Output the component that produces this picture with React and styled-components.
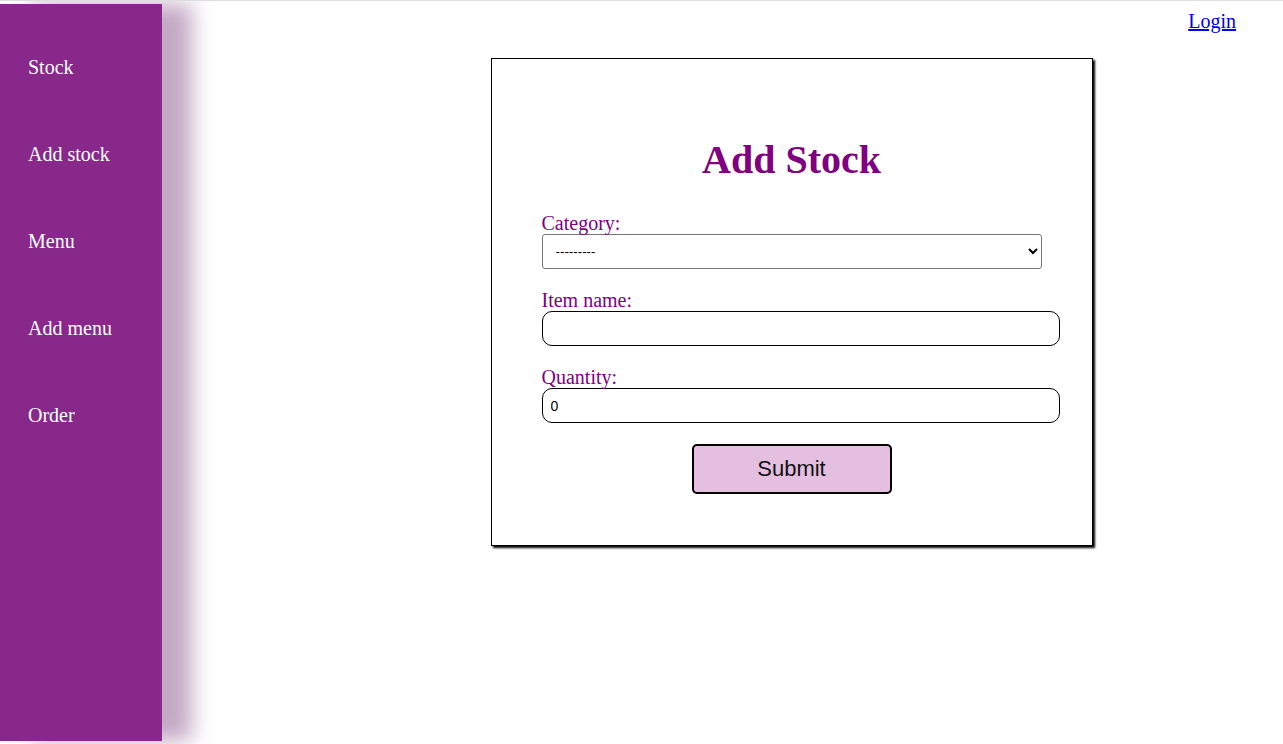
import React from 'react';
import styled, { createGlobalStyle } from 'styled-components';

const GlobalStyle = createGlobalStyle`
    html, body {
        margin: 0;
        padding: 0;
        background: #FFFFFF;
        font-family: "Liberation Serif", "Times New Roman", serif;
    }
`;

const Page = styled.div`
    display: flex;
    height: 744px;
    box-sizing: border-box;
    border-top: 1px solid #DEDEDE;
    padding-top: 3px;
    overflow: hidden;
`;

const Sidebar = styled.nav`
    position: relative;
    z-index: 1;
    flex: 0 0 162px;
    height: 737px;
    box-sizing: border-box;
    padding: 52px 0 0 28px;
    display: flex;
    flex-direction: column;
    align-items: flex-start;
    gap: 64px;

    background: #88288A;
    box-shadow: 30px 0 20px #C4A9C4;
`;

const NavLink = styled.a`
    font-size: 20px;
    line-height: 23px;
    color: #FFFFFF;
    text-decoration: none;
`;

const Main = styled.main`
    flex: 1;
    display: flex;
    flex-direction: column;
`;

const TopRow = styled.div`
    display: flex;
    justify-content: flex-end;
    padding: 6px 47px 0 0;
`;

const LoginLink = styled.a`
    font-size: 20px;
    line-height: 23px;
    color: #0000EE;
    text-decoration: underline;
`;

const CardArea = styled.div`
    display: flex;
    justify-content: center;
    padding-left: 138px;
    margin-top: 25px;
`;

const Card = styled.form`
    width: 602px;
    box-sizing: border-box;
    padding: 79px 50px 51px;

    background: #FFFFFF;
    border: 1px solid #000000;
    box-shadow: 2px 2px 2px #000000;
`;

const Title = styled.h1`
    margin: 0 0 30px;
    font-size: 40px;
    line-height: 44px;
    font-weight: bold;
    text-align: center;
    color: #800080;
`;

const Group = styled.div`
    margin-bottom: ${(p) => (p.$last ? '21px' : '20px')};
`;

const Label = styled.label`
    display: block;
    font-size: 20px;
    line-height: 22px;
    color: #800080;
`;

const Select = styled.select`
    display: block;
    width: 500px;
    height: 35px;
    box-sizing: border-box;
    padding: 0 9px;

    font-family: "Liberation Sans", Arial, sans-serif;
    font-size: 13.33px;
    color: #000000;
    background: #FFFFFF;
    border: 1px solid #767676;
    border-radius: 3px;
`;

const Input = styled.input`
    display: block;
    width: 518px;
    height: 35px;
    box-sizing: border-box;
    padding: 0 8px;

    font-family: "Liberation Sans", Arial, sans-serif;
    font-size: 14px;
    color: #000000;
    background: #FFFFFF;
    border: 1px solid #000000;
    border-radius: 10px;
`;

const SubmitButton = styled.button`
    display: block;
    margin: 0 auto;
    width: 200px;
    height: 50px;

    font-family: "Liberation Sans", Arial, sans-serif;
    font-size: 22px;
    color: #111111;
    background: #E4BFE0;
    border: 2px solid #000000;
    border-radius: 5px;
`;

const navItems = ['Stock', 'Add stock', 'Menu', 'Add menu', 'Order'];

export default function App() {
    return (
        <Page>
            <GlobalStyle />
            <Sidebar>
                {navItems.map((item) => (
                    <NavLink key={item} href="#">{item}</NavLink>
                ))}
            </Sidebar>
            <Main>
                <TopRow>
                    <LoginLink href="#">Login</LoginLink>
                </TopRow>
                <CardArea>
                    <Card onSubmit={(e) => e.preventDefault()}>
                        <Title>Add Stock</Title>
                        <Group>
                            <Label htmlFor="category">Category:</Label>
                            <Select id="category" defaultValue="">
                                <option value="">---------</option>
                            </Select>
                        </Group>
                        <Group>
                            <Label htmlFor="item">Item name:</Label>
                            <Input id="item" type="text" />
                        </Group>
                        <Group $last>
                            <Label htmlFor="qty">Quantity:</Label>
                            <Input id="qty" type="number" defaultValue="0" />
                        </Group>
                        <SubmitButton type="submit">Submit</SubmitButton>
                    </Card>
                </CardArea>
            </Main>
        </Page>
    );
}
